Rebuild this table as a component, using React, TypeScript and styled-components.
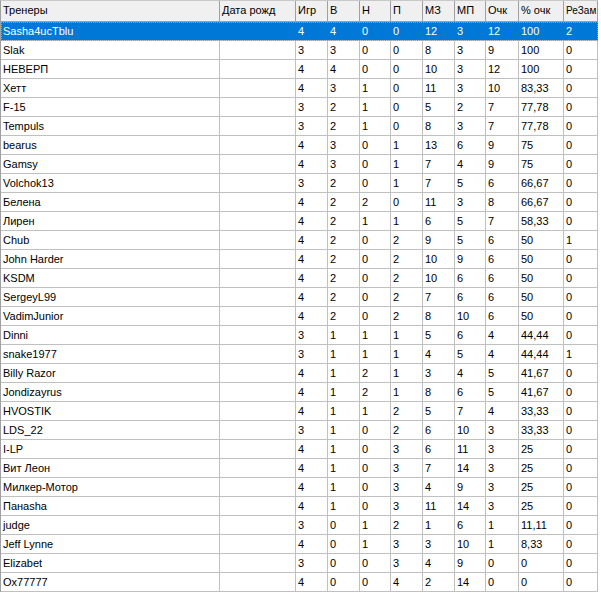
import React from "react";
import styled, { createGlobalStyle } from "styled-components";

const GlobalStyle = createGlobalStyle`
    html, body {
        margin: 0;
        padding: 0;
        background: #fff;
    }
    body {
        font-family: "Liberation Sans", Arial, sans-serif;
        font-size: 11px;
        color: #000;
    }
`;

const COLUMNS = "219px 76px 32px 32px 31px 32px 32px 31px 33px 45px 34px";

const GridCSS = styled.div`
    width: 598px;
    border-left: 1px solid #a0a0a0;
    border-top: 1px solid #c8c8c8;
    box-sizing: border-box;
`;

const HeaderRowCSS = styled.div`
    display: grid;
    grid-template-columns: ${COLUMNS};
    height: 20px;
    background: #f0f0f0;
    border-bottom: 1px solid #a0a0a0;
    box-sizing: content-box;
`;

const HeaderCell = styled.div<{ $small?: boolean }>`
    border-right: 1px solid #a0a0a0;
    padding-left: 2px;
    line-height: 19px;
    font-size: ${(p) => (p.$small ? "10px" : "11px")};
    white-space: nowrap;
    overflow: hidden;
    box-sizing: border-box;
`;

const RowCSS = styled.div<{ $selected?: boolean }>`
    display: grid;
    grid-template-columns: ${COLUMNS};
    height: 18px;
    border-bottom: 1px solid #c0c0c0;
    background: ${(p) => (p.$selected ? "#0078d7" : "#fff")};
    color: ${(p) => (p.$selected ? "#fff" : "#000")};
    outline: ${(p) => (p.$selected ? "1px dotted #ff8728" : "none")};
    outline-offset: -1px;
`;

const Cell = styled.div<{ $selected?: boolean }>`
    border-right: 1px solid ${(p) => (p.$selected ? "#0078d7" : "#c0c0c0")};
    padding-left: 2px;
    line-height: 18px;
    white-space: nowrap;
    overflow: hidden;
    box-sizing: border-box;
`;

const headers = [
    "Тренеры",
    "Дата рожд",
    "Игр",
    "В",
    "Н",
    "П",
    "МЗ",
    "МП",
    "Очк",
    "% очк",
    "РеЗам",
];

type Coach = [string, number, number, number, number, number, number, number, string, number];

const coaches: Coach[] = [
    ["Sasha4ucTblu", 4, 4, 0, 0, 12, 3, 12, "100", 2],
    ["Slak", 3, 3, 0, 0, 8, 3, 9, "100", 0],
    ["НЕВЕРП", 4, 4, 0, 0, 10, 3, 12, "100", 0],
    ["Хетт", 4, 3, 1, 0, 11, 3, 10, "83,33", 0],
    ["F-15", 3, 2, 1, 0, 5, 2, 7, "77,78", 0],
    ["Tempuls", 3, 2, 1, 0, 8, 3, 7, "77,78", 0],
    ["bearus", 4, 3, 0, 1, 13, 6, 9, "75", 0],
    ["Gamsy", 4, 3, 0, 1, 7, 4, 9, "75", 0],
    ["Volchok13", 3, 2, 0, 1, 7, 5, 6, "66,67", 0],
    ["Белена", 4, 2, 2, 0, 11, 3, 8, "66,67", 0],
    ["Лирен", 4, 2, 1, 1, 6, 5, 7, "58,33", 0],
    ["Chub", 4, 2, 0, 2, 9, 5, 6, "50", 1],
    ["John Harder", 4, 2, 0, 2, 10, 9, 6, "50", 0],
    ["KSDM", 4, 2, 0, 2, 10, 6, 6, "50", 0],
    ["SergeyL99", 4, 2, 0, 2, 7, 6, 6, "50", 0],
    ["VadimJunior", 4, 2, 0, 2, 8, 10, 6, "50", 0],
    ["Dinni", 3, 1, 1, 1, 5, 6, 4, "44,44", 0],
    ["snake1977", 3, 1, 1, 1, 4, 5, 4, "44,44", 1],
    ["Billy Razor", 4, 1, 2, 1, 3, 4, 5, "41,67", 0],
    ["Jondizayrus", 4, 1, 2, 1, 8, 6, 5, "41,67", 0],
    ["HVOSTIK", 4, 1, 1, 2, 5, 7, 4, "33,33", 0],
    ["LDS_22", 3, 1, 0, 2, 6, 10, 3, "33,33", 0],
    ["I-LP", 4, 1, 0, 3, 6, 11, 3, "25", 0],
    ["Вит Леон", 4, 1, 0, 3, 7, 14, 3, "25", 0],
    ["Милкер-Мотор", 4, 1, 0, 3, 4, 9, 3, "25", 0],
    ["Панasha", 4, 1, 0, 3, 11, 14, 3, "25", 0],
    ["judge", 3, 0, 1, 2, 1, 6, 1, "11,11", 0],
    ["Jeff Lynne", 4, 0, 1, 3, 3, 10, 1, "8,33", 0],
    ["Elizabet", 3, 0, 0, 3, 4, 9, 0, "0", 0],
    ["Ox77777", 4, 0, 0, 4, 2, 14, 0, "0", 0],
];

const App: React.FC = () => {
    const selectedIndex = 0;

    return (
        <>
            <GlobalStyle />
            <GridCSS>
                <HeaderRowCSS>
                    {headers.map((title, i) => (
                        <HeaderCell key={title} $small={i === headers.length - 1}>
                            {title}
                        </HeaderCell>
                    ))}
                </HeaderRowCSS>
                {coaches.map((coach, index) => {
                    const selected = index === selectedIndex;
                    const [name, ...stats] = coach;
                    return (
                        <RowCSS key={name} $selected={selected}>
                            <Cell $selected={selected}>{name}</Cell>
                            {/* дата рождения не заполнена */}
                            <Cell $selected={selected} />
                            {stats.map((value, i) => (
                                <Cell key={i} $selected={selected}>
                                    {value}
                                </Cell>
                            ))}
                        </RowCSS>
                    );
                })}
            </GridCSS>
        </>
    );
};

export default App;
